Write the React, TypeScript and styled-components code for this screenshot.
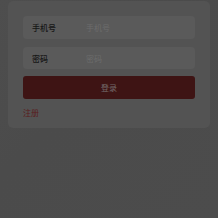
import React from "react";
import styled, { createGlobalStyle } from "styled-components";

const Global = createGlobalStyle`
  html, body { margin: 0; padding: 0; background: #4b4b4b; }
  body { font-family: "Noto Sans CJK SC", "Noto Sans", sans-serif; }
  #root { min-height: 218px; }
`;

const Page = styled.div`
  width: 218px;
  height: 218px;
  box-sizing: border-box;
  padding: 1px 8px 0;
  background: linear-gradient(135deg, #4e4e4e 0%, #4b4b4b 40%, #4c4c4c 100%);
`;

const Card = styled.div`
  background: #535353;
  border-radius: 5px;
  padding: 15px 15px 9px;
  display: flex;
  flex-direction: column;
  box-sizing: border-box;
  height: 127px;
`;

const Field = styled.div<{ $mb: number }>`
  height: 24px;
  border-radius: 4px;
  background: #5a5a5a;
  display: flex;
  align-items: center;
  padding-left: 9px;
  margin-bottom: ${(p) => p.$mb}px;
`;

const Label = styled.span`
  width: 54px;
  font-size: 8px;
  font-weight: 500;
  color: #161616;
  flex-shrink: 0;
`;

const Input = styled.input`
  flex: 1;
  min-width: 0;
  border: none;
  outline: none;
  background: transparent;
  font-family: inherit;
  font-size: 8px;
  padding: 0;
  color: #161616;
  &::placeholder { color: #6c6c6c; }
`;

const Button = styled.button`
  height: 24px;
  border: none;
  border-radius: 3px;
  background: #3e1414;
  color: #736b6b;
  font-family: inherit;
  font-size: 8px;
  padding: 0;
  margin-bottom: 8px;
`;

const Link = styled.a`
  font-size: 8px;
  color: #5a1c1c;
  text-decoration: none;
  line-height: 12px;
`;

export default function App() {
  return (
    <>
      <Global />
      <Page>
        <Card>
          <Field $mb={8}>
            <Label>手机号</Label>
            <Input placeholder="手机号" />
          </Field>
          <Field $mb={7}>
            <Label>密码</Label>
            <Input type="password" placeholder="密码" />
          </Field>
          <Button>登录</Button>
          <Link href="#">注册</Link>
        </Card>
      </Page>
    </>
  );
}
